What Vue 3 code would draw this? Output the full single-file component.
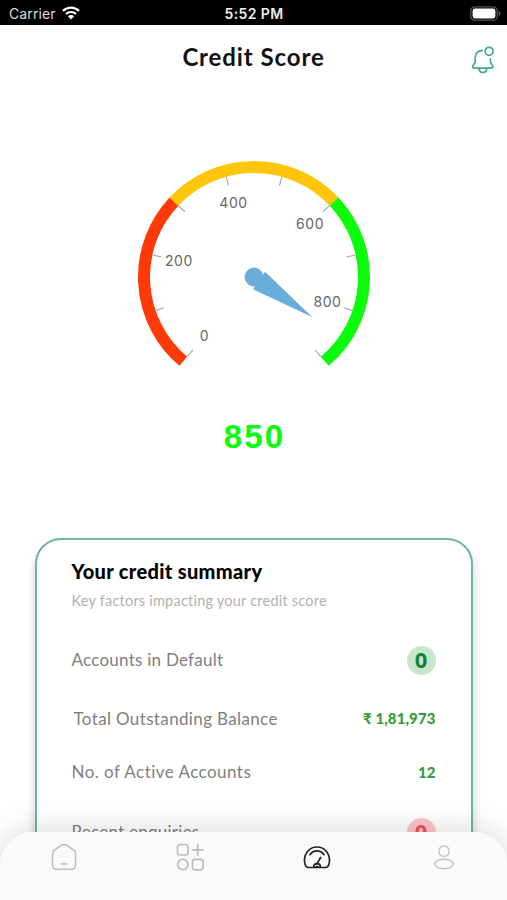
<script setup>
import { ref } from "vue";

const score = ref(850);
const maxScore = 900;
const cx = 120;
const cy = 120;

// the dial sweeps 280 degrees, 0 points straight up
const toAngle = (value) => -140 + (value / maxScore) * 280;
const point = (angle, r) => {
  const rad = (angle * Math.PI) / 180;
  return [cx + r * Math.sin(rad), cy - r * Math.cos(rad)];
};
const arc = (from, to) => {
  const [x1, y1] = point(toAngle(from), 110);
  const [x2, y2] = point(toAngle(to), 110);
  return `M${x1} ${y1}A110 110 0 0 1 ${x2} ${y2}`;
};

const bands = [
  { color: "#ff3a08", d: arc(0, 300) },
  { color: "#ffc50b", d: arc(300, 600) },
  { color: "#0bfb0b", d: arc(600, 900) },
];

const ticks = [];
for (let v = 0; v <= maxScore; v += 100) {
  const [x1, y1] = point(toAngle(v), 104);
  const [x2, y2] = point(toAngle(v), 95);
  ticks.push({ x1, y1, x2, y2 });
}

const labels = [
  { text: 0, x: 70.5, y: 184 },
  { text: 200, x: 45, y: 109 },
  { text: 400, x: 99.5, y: 51 },
  { text: 600, x: 176, y: 72 },
  { text: 800, x: 193.5, y: 150 },
];

const rows = [
  { name: "Accounts in Default", value: "0", type: "badge good" },
  { name: "Total Outstanding Balance", value: "₹ 1,81,973", type: "amount" },
  { name: "No. of Active Accounts", value: "12", type: "amount" },
  { name: "Recent enquiries", value: "0", type: "badge bad" },
];
</script>

<template>
  <div class="screen">
    <div class="status">
      <div class="carrier">
        <span>Carrier</span>
        <svg width="18" height="14" viewBox="0 0 18 14" fill="none" stroke="#fff" stroke-width="2.2">
          <path d="M1 4.9a11.4 11.4 0 0 1 16 0" />
          <path d="M4 8a7.2 7.2 0 0 1 10 0" />
          <path d="M9 13.6L5.9 10.3a4.4 4.4 0 0 1 6.2 0z" fill="#fff" stroke="none" />
        </svg>
      </div>
      <span class="time">5:52 PM</span>
      <svg class="battery" width="31" height="15" viewBox="0 0 31 15">
        <rect x="0.8" y="0.8" width="26.4" height="13.4" rx="4" fill="none" stroke="#555" stroke-width="1.3" />
        <rect x="2.6" y="2.6" width="22.8" height="9.8" rx="2.3" fill="#fff" />
        <path d="M28.7 5v5c2.2-.9 2.2-4.1 0-5z" fill="#666" />
      </svg>
    </div>

    <header class="header">
      <h1>Credit Score</h1>
      <svg class="bell" width="24" height="28" viewBox="0 0 24 28" fill="none" stroke="#45aa86" stroke-width="1.7" stroke-linecap="round" stroke-linejoin="round">
        <path d="M11.2 4.4C7 4.900 4.200 7.600 4.200 11.800v3.700c0 1.700-2.600 3.600-2.600 5.100 0 1 .7 1.500 1.800 1.500h16.700c1.100 0 1.800-.6 1.800-1.500 0-1.400-2.500-3.200-2.500-5.100v-2.600" />
        <path d="M8 23c.4 2 1.900 3.500 3.800 3.500s3.500-1.500 3.900-3.500" />
        <circle cx="18.100" cy="5.300" r="4" />
      </svg>
    </header>

    <main class="content">
      <svg class="gauge" width="240" height="240" viewBox="0 0 240 240">
        <path v-for="band in bands" :key="band.color" :d="band.d" :stroke="band.color" fill="none" stroke-width="12" />
        <line v-for="(t, i) in ticks" :key="i" :x1="t.x1" :y1="t.y1" :x2="t.x2" :y2="t.y2" stroke="#aaa" stroke-width="1.2" />
        <text v-for="l in labels" :key="l.text" :x="l.x" :y="l.y" class="label">{{ l.text }}</text>
        <g :transform="`rotate(${toAngle(score)} ${cx} ${cy})`" fill="#6aaddb">
          <circle :cx="cx" :cy="cy" r="9.4" />
          <path d="M120 49.5L130.600 113.800H109.400Z" />
        </g>
      </svg>
      <div class="score">{{ score }}</div>

      <section class="card">
        <h2>Your credit summary</h2>
        <p class="hint">Key factors impacting your credit score</p>
        <div class="row" v-for="(row, i) in rows" :key="row.name" :class="'row-' + i">
          <span class="name">{{ row.name }}</span>
          <span :class="row.type">{{ row.value }}</span>
        </div>
      </section>
    </main>

    <nav class="tabs">
      <button>
        <svg width="28" height="28" viewBox="0 0 28 28" fill="none" stroke="#bdbdbd" stroke-width="1.5" stroke-linecap="round" stroke-linejoin="round">
          <path d="M12.5 2.200Q15 .6 17.500 2.200L25 7.300Q26.500 8.700 26.500 11v11.200q0 4-4 4H7.500q-4 0-4-4V11Q3.500 8.700 5.200 7.300z" />
          <path d="M12.300 21h5.400" />
        </svg>
      </button>
      <button>
        <svg width="28" height="28" viewBox="0 0 28 28" fill="none" stroke="#bdbdbd" stroke-width="1.7" stroke-linecap="round">
          <rect x="1.500" y="1.500" width="10.500" height="10.500" rx="2.500" />
          <path d="M21.700 1.500v10.700M16.400 6.800h10.600" />
          <circle cx="6.800" cy="21.500" r="5.200" />
          <rect x="16.500" y="16.300" width="10.500" height="10.500" rx="2.500" />
        </svg>
      </button>
      <button>
        <svg width="28" height="28" viewBox="0 0 28 28" fill="none" stroke="#222" stroke-width="1.7" stroke-linecap="round" stroke-linejoin="round">
          <path d="M4.800 24.500C2.500 23.500 1.500 20.500 1.500 17.500 1.500 9.500 7.100 4 14 4s12.500 5.500 12.500 13.500c0 3-1 6-3.300 7z" />
          <path d="M7 11.700c3.700-5 10.300-5 14 0" />
          <path d="M17.600 14.500L14 20.800" />
          <path d="M10.800 24c0-4.400 6.600-4.400 6.600 0M13.300 23.500h1.600" />
        </svg>
      </button>
      <button>
        <svg width="28" height="28" viewBox="0 0 28 28" fill="none" stroke="#c2c2c2" stroke-width="1.4">
          <circle cx="14" cy="8.200" r="5.200" />
          <ellipse cx="14" cy="21" rx="9.200" ry="4.800" />
        </svg>
      </button>
    </nav>
  </div>
</template>

<style>
body {
  margin: 0;
  background: #fff;
}
</style>

<style scoped>
.screen {
  width: 507px;
  height: 900px;
  display: flex;
  flex-direction: column;
  overflow: hidden;
  background: #fff;
  font-family: Lato, "Open Sans", sans-serif;
}

.status {
  height: 25px;
  flex: none;
  display: grid;
  grid-template-columns: 1fr auto 1fr;
  align-items: center;
  box-sizing: border-box;
  padding: 1px 6px 0 9px;
  background: #000;
  color: #ddd;
  font-family: Inter, sans-serif;
  font-size: 14px;
}
.carrier {
  display: flex;
  align-items: center;
  gap: 6px;
  letter-spacing: 0.1px;
}
.time {
  margin-right: 2px;
  color: #eee;
  font-weight: 600;
  letter-spacing: 0.4px;
}
.battery {
  justify-self: end;
}

.header {
  height: 66px;
  flex: none;
  display: grid;
  grid-template-columns: 1fr auto 1fr;
  align-items: center;
  box-sizing: border-box;
  padding: 0 12px;
}
.header h1 {
  grid-column: 2;
  margin: -3px 0 0;
  color: #111;
  font-size: 24px;
  font-weight: 700;
  letter-spacing: 0.9px;
}
.bell {
  justify-self: end;
  margin-top: 3px;
}

.content {
  flex: 1;
  min-height: 0;
  display: flex;
  flex-direction: column;
  align-items: center;
  overflow: hidden;
}
.gauge {
  flex: none;
  margin-top: 66px;
}
.label {
  fill: #666;
  font-family: Inter, sans-serif;
  font-size: 14px;
  letter-spacing: 0.6px;
  text-anchor: middle;
}
.score {
  margin-top: 20px;
  height: 40px;
  line-height: 40px;
  color: #0bfb0b;
  font-family: "Liberation Sans", sans-serif;
  font-size: 33px;
  font-weight: 700;
  letter-spacing: 2.2px;
  text-indent: 2px;
}

.card {
  flex: none;
  width: 438px;
  height: 400px;
  margin-top: 81px;
  box-sizing: border-box;
  padding: 17px 35px 0;
  border: 2px solid #6fb59d;
  border-radius: 26px;
  background: #fff;
  box-shadow: 0 8px 10px rgba(0, 0, 0, 0.2);
}
.card h2 {
  margin: 0;
  height: 28px;
  line-height: 28px;
  color: #000;
  font-size: 20px;
  font-weight: 900;
  letter-spacing: 0.33px;
}
.hint {
  margin: 3px 0 0;
  height: 26px;
  line-height: 26px;
  color: #b0b0b0;
  font-size: 14.5px;
  letter-spacing: 0.22px;
}
.row {
  display: flex;
  align-items: center;
  justify-content: space-between;
  height: 30px;
}
.row-0 {
  margin-top: 31px;
}
.row-1 {
  margin-top: 28px;
  padding-left: 2px;
}
.row-2 {
  margin-top: 24px;
}
.row-3 {
  margin-top: 30px;
}
.name {
  margin-top: -2px;
  color: #808080;
  font-size: 17px;
  letter-spacing: 0.25px;
}
.row-1 .name {
  margin-top: 0;
  letter-spacing: 0.36px;
}
.row-2 .name {
  margin-top: -1px;
  letter-spacing: 0.46px;
}
.amount {
  color: #369b36;
  font-size: 15px;
  font-weight: 900;
  letter-spacing: 0.1px;
}
.badge {
  width: 29px;
  height: 29px;
  line-height: 27px;
  border-radius: 50%;
  text-align: center;
  font-family: "Open Sans", sans-serif;
  font-size: 22px;
  font-weight: 700;
}
.good {
  background: #c8e6c9;
  color: #14813f;
}
.bad {
  background: #ffc4ca;
  color: #ef5054;
}

.tabs {
  position: relative;
  flex: none;
  height: 68px;
  display: grid;
  grid-template-columns: repeat(4, 1fr);
  border-radius: 32px 32px 0 0;
  background: #fafafa;
  box-shadow: 0 0 32px rgba(0, 0, 0, 0.17);
}
.tabs button {
  display: flex;
  justify-content: center;
  align-items: flex-start;
  padding: 11px 0 0;
  border: none;
  background: none;
  cursor: pointer;
}
</style>
